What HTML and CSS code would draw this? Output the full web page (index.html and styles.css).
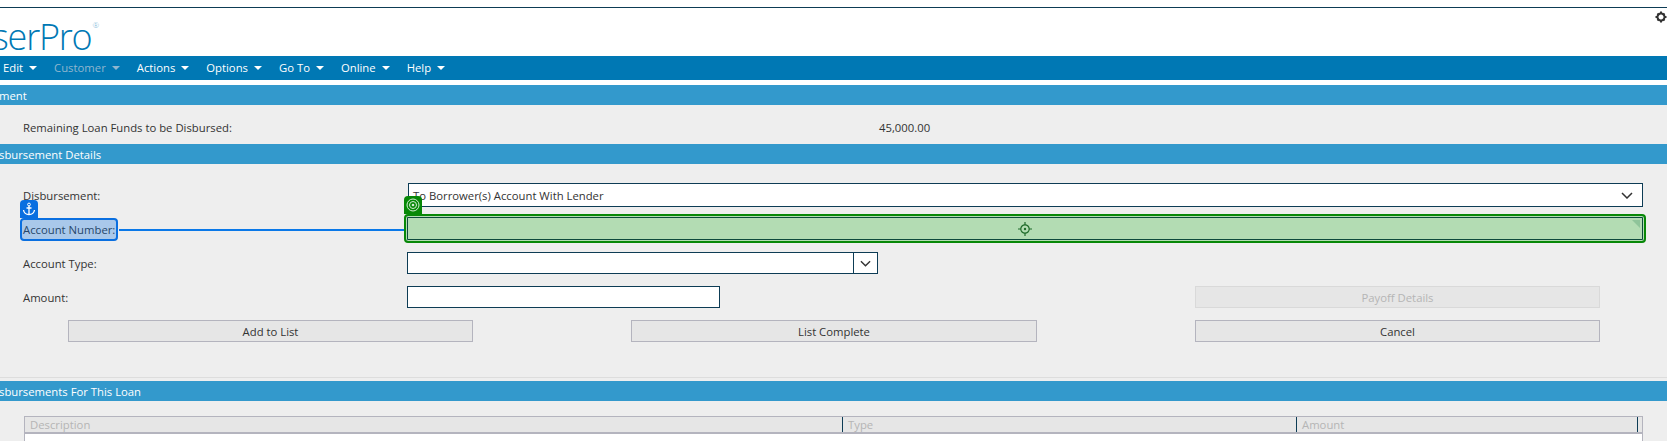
FILE: index.html
```html
<!DOCTYPE html>
<html lang="en">
<head>
  <meta charset="UTF-8" />
  <title>LaserPro</title>
  <link rel="stylesheet" href="styles.css">
</head>
<body>
  <div class="top-rule"></div>
  <header class="brand">
    <div class="logo">serPro<sup>®</sup></div>
    <svg class="gear" viewBox="0 0 24 24" width="12" height="12">
      <circle cx="12" cy="12" r="7" fill="none" stroke="#333" stroke-width="4"/>
      <path d="M10 1h4v5h-4zM10 18h4v5h-4zM1 10h5v4H1zM18 10h5v4h-5zM3.500 6.300l2.800-2.800 3.500 3.500-2.800 2.800zM14.200 17l2.800-2.800 3.500 3.500-2.800 2.800zM3.500 17.700L7 14.200 9.800 17l-3.500 3.500zM14.200 7l3.500-3.500 2.800 2.800L17 9.800z" fill="#333"/>
    </svg>
  </header>

  <nav class="menu">
    <a class="menu-item">Edit</a>
    <a class="menu-item disabled">Customer</a>
    <a class="menu-item">Actions</a>
    <a class="menu-item">Options</a>
    <a class="menu-item">Go To</a>
    <a class="menu-item">Online</a>
    <a class="menu-item">Help</a>
  </nav>

  <h3 class="section-title first">ment</h3>
  <div class="remaining">
    <span class="remaining-label">Remaining Loan Funds to be Disbursed:</span>
    <span>45,000.00</span>
  </div>

  <h3 class="section-title">sbursement Details</h3>
  <div class="form">
    <div class="row">
      <label class="row-label">Disbursement:</label>
      <div class="select wide">
        <span>To Borrower(s) Account With Lender</span>
        <svg class="chevron" viewBox="0 0 12 7" width="12" height="7"><path d="M1 1l5 5 5-5" fill="none" stroke="#333" stroke-width="1.500"/></svg>
      </div>
    </div>

    <div class="row">
      <label class="row-label">
        <span class="anchor-label">
          Account Number:
          <span class="anchor-tab">
            <svg viewBox="0 0 14 14" width="14" height="14"><circle cx="7" cy="2.500" r="1.400" fill="none" stroke="#fff" stroke-width="1"/><path d="M7 4v9M4.500 6h5M1.500 8c.5 3 3 4.500 5.500 4.500S12 11 12.500 8" fill="none" stroke="#fff" stroke-width="1.300"/></svg>
          </span>
        </span>
        <span class="link-line"></span>
      </label>
      <div class="target-wrap">
        <div class="target-field">
          <svg viewBox="0 0 14 14" width="14" height="14"><circle cx="7" cy="7" r="4.200" fill="none" stroke="#1f6b2a" stroke-width="1.200"/><circle cx="7" cy="7" r="1.200" fill="#1f6b2a"/><path d="M7 0v3M7 11v3M0 7h3M11 7h3" stroke="#1f6b2a" stroke-width="1.200"/></svg>
          <span class="corner"></span>
        </div>
        <span class="target-tab">
          <svg viewBox="0 0 14 14" width="14" height="14"><circle cx="7" cy="7" r="6" fill="none" stroke="#d5ecd5" stroke-width="1"/><circle cx="7" cy="7" r="3.500" fill="none" stroke="#d5ecd5" stroke-width="1"/><circle cx="7" cy="7" r="1.300" fill="#d5ecd5"/></svg>
        </span>
      </div>
    </div>

    <div class="row">
      <label class="row-label">Account Type:</label>
      <div class="select narrow">
        <span class="select-btn">
          <svg viewBox="0 0 12 7" width="11" height="7"><path d="M1 1l5 5 5-5" fill="none" stroke="#333" stroke-width="1.500"/></svg>
        </span>
      </div>
    </div>

    <div class="row">
      <label class="row-label">Amount:</label>
      <div class="input amount"></div>
      <button class="btn off payoff">Payoff Details</button>
    </div>

    <div class="row buttons">
      <button class="btn">Add to List</button>
      <button class="btn btn-mid">List Complete</button>
      <button class="btn">Cancel</button>
    </div>
  </div>

  <h3 class="section-title">sbursements For This Loan</h3>
  <div class="list">
    <div class="list-head">
      <div class="col col-desc">Description</div>
      <div class="col col-type">Type</div>
      <div class="col col-amount">Amount</div>
    </div>
    <div class="list-body"></div>
  </div>
</body>
</html>
```

FILE: styles.css
```css
html,
body {
  height: 441px;
  overflow: hidden;
}

body {
  margin: 0;
  background-color: #eee;
  color: #333;
  font-family: "Open Sans", "Noto Sans", sans-serif;
  font-size: 11.300px;
  line-height: 18px;
}

.top-rule {
  height: 7px;
  background-color: #fff;
  border-bottom: 1px solid #0d3c55;
}

.brand {
  height: 48px;
  background-color: #fff;
  display: flex;
  justify-content: space-between;
  overflow: hidden;
}

.logo {
  margin: 9px 0 0 -8px;
  color: #0078b4;
  font-size: 36px;
  font-weight: 300;
  line-height: 40px;
  letter-spacing: -1.200px;
}

.logo sup {
  font-size: 8px;
  line-height: 0;
  vertical-align: 22px;
  letter-spacing: 0;
  color: #7fb8d8;
  margin-left: 1px;
}

.gear {
  margin-top: 3px;
  flex-shrink: 0;
}

.menu {
  height: 24px;
  background-color: #0078b4;
  display: flex;
  align-items: center;
  padding-left: 3px;
  border-bottom: 5px solid #fff;
}

.menu-item {
  color: #fff;
  display: flex;
  align-items: center;
  margin-right: 17px;
}

.menu-item::after {
  content: "";
  margin-left: 6px;
  border-left: 4px solid transparent;
  border-right: 4px solid transparent;
  border-top: 4px solid #fff;
}

.menu-item.disabled {
  color: #8fb6cf;
}

.menu-item.disabled::after {
  border-top-color: #8fb6cf;
}

.section-title {
  height: 20px;
  margin: 0;
  background-color: #39c;
  color: #fff;
  font-size: 11.300px;
  font-weight: 400;
  line-height: 22px;
  white-space: nowrap;
  overflow: hidden;
  text-indent: -1px;
}

.remaining {
  height: 39px;
  display: flex;
  align-items: center;
  padding: 7px 0 0 23px;
  box-sizing: border-box;
}

.remaining-label {
  width: 856px;
}

.form {
  padding: 19px 24px 35px 23px;
  display: flex;
  flex-direction: column;
  gap: 12px;
  border-bottom: 1px solid #ddd;
  margin-bottom: 3px;
}

.row {
  display: flex;
  align-items: center;
  height: 22px;
}

.row:first-child {
  height: 24px;
  margin-bottom: -1px;
}

.row-label {
  width: 384px;
  flex-shrink: 0;
  position: relative;
  padding-top: 1px;
}

.select,
.input {
  box-sizing: border-box;
  background-color: #fff;
  border: 1px solid #0d3c55;
  display: flex;
  align-items: center;
  justify-content: space-between;
}

.wide {
  flex: 1;
  height: 24px;
  margin-left: 1px;
  padding: 0 4px;
}

.wide span {
  padding-top: 1px;
}

.chevron {
  margin-right: 5px;
}

.narrow {
  width: 471px;
  height: 22px;
  justify-content: flex-end;
}

.select-btn {
  width: 23px;
  height: 20px;
  border-left: 1px solid #0d3c55;
  display: flex;
  align-items: center;
  justify-content: center;
}

.amount {
  width: 313px;
  height: 22px;
}

.btn {
  box-sizing: border-box;
  width: 405px;
  height: 22px;
  padding: 1px 0 0;
  background-color: #e6e6e6;
  border: 1px solid #b4b4be;
  color: #333;
  font-family: inherit;
  font-size: 11.300px;
}

.btn-mid {
  width: 406px;
}

.btn.off {
  border-color: #d9d9d9;
  color: #b5b5b5;
}

.payoff {
  margin-left: 475px;
}

.buttons {
  padding-left: 45px;
  gap: 158px;
}

/* overlays: anchor on the label, target on the field */
.anchor-label {
  position: relative;
  display: inline-block;
}

.anchor-label::before {
  content: "";
  position: absolute;
  left: -3px;
  right: -3px;
  top: -3px;
  bottom: -2px;
  box-sizing: border-box;
  border: 2px solid #0a6fe0;
  border-radius: 4px;
  background-color: rgba(10, 111, 224, 0.3);
}

.anchor-tab {
  position: absolute;
  left: -3px;
  top: -21px;
  width: 18px;
  height: 18px;
  background-color: #0a6fe0;
  border-radius: 4px 4px 0 0;
  display: flex;
  align-items: center;
  justify-content: center;
}

.link-line {
  position: absolute;
  left: 96px;
  right: -1px;
  top: 9px;
  height: 2px;
  background-color: #0a78e8;
}

.target-wrap {
  flex: 1;
  position: relative;
  height: 22px;
}

.target-field {
  position: absolute;
  inset: -4px -3px -3px -3px;
  box-sizing: border-box;
  border: 2px solid #078807;
  border-radius: 4px;
  background-color: #b3dcb3;
  box-shadow: inset 0 0 0 1px #b3dcb3, inset 0 0 0 2px #0d4a3c;
  display: flex;
  align-items: center;
  justify-content: center;
}

.corner {
  position: absolute;
  top: 4px;
  right: 4px;
  border-top: 8px solid #8fc49a;
  border-left: 8px solid transparent;
}

.target-tab {
  position: absolute;
  left: -3px;
  top: -22px;
  width: 18px;
  height: 18px;
  background-color: #078807;
  border-radius: 4px 4px 0 0;
  display: flex;
  align-items: center;
  justify-content: center;
}

.list {
  margin: 15px 24px 0 24px;
}

.list-head {
  box-sizing: border-box;
  height: 18px;
  display: flex;
  background-color: #e6e6e6;
  border: 1px solid #b4b4be;
  border-bottom-width: 2px;
  color: #b5b5b5;
  line-height: 15px;
}

.col {
  box-sizing: border-box;
  padding-left: 5px;
  border-right: 1px solid #0d3c55;
}

.col-desc {
  width: 818px;
}

.col-type {
  width: 454px;
}

.col-amount {
  width: 341px;
}

.list-body {
  box-sizing: border-box;
  height: 20px;
  background-color: #fff;
  border: 1px solid #b4b4be;
  border-top: 0;
}
```
